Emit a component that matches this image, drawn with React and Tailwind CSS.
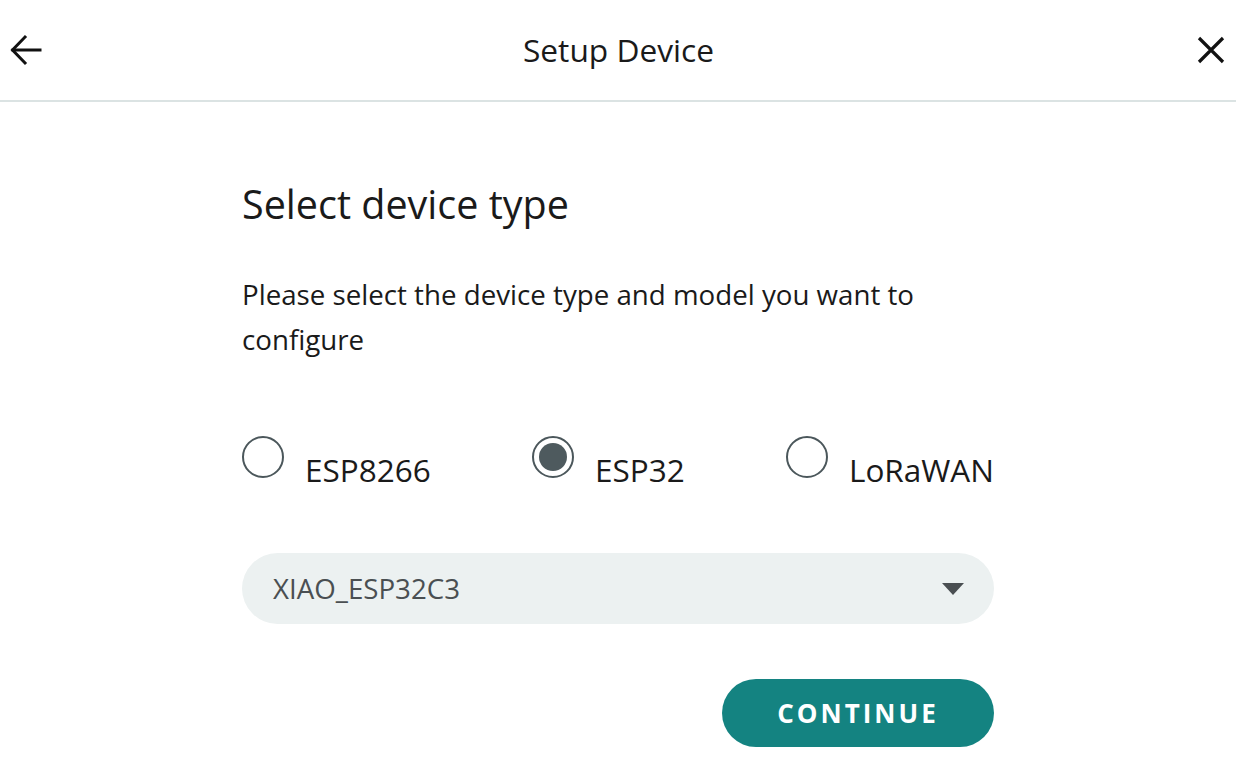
import React, { useState } from "react";

const options = ["ESP8266", "ESP32", "LoRaWAN"];

function Radio({ label, checked, onClick }) {
  return (
    <button type="button" onClick={onClick} className="flex items-start gap-[21px] text-left">
      <span className="flex h-[42px] w-[42px] items-center justify-center rounded-full border-2 border-[#4b575b]">
        {checked && <span className="h-[28px] w-[28px] rounded-full bg-[#4e5a5e]" />}
      </span>
      <span className="pt-[16px] text-[31.5px] leading-[36px] text-[#1a1a1a]">{label}</span>
    </button>
  );
}

export default function App() {
  const [sel, setSel] = useState("ESP32");
  return (
    <div className="min-h-[766px] w-full bg-white" style={{ fontFamily: '"Open Sans", "Noto Sans", sans-serif' }}>
      <header className="flex h-[102px] items-center justify-between border-b-2 border-[#dbe3e3] px-[10px]">
        <button type="button" className="flex h-[32px] w-[32px] items-center justify-center">
          <svg width="32" height="32" viewBox="0 0 32 32" fill="none" stroke="#111" strokeWidth="3" strokeLinecap="square">
            <path d="M30 16H3" />
            <path d="M15 3L2.5 16L15 29" strokeLinejoin="miter" />
          </svg>
        </button>
        <h1 className="text-[31.7px] leading-[40px] text-[#1a1a1a]">Setup Device</h1>
        <button type="button" className="mr-[-1px] flex h-[32px] w-[32px] items-center justify-center">
          <svg width="28" height="28" viewBox="0 0 28 28" fill="none" stroke="#111" strokeWidth="3.2">
            <path d="M2 2L26 26M26 2L2 26" />
          </svg>
        </button>
      </header>
      <main className="mx-auto w-[752px] pt-[78px]">
        <h2 className="text-[39.5px] leading-[48px] text-[#1a1a1a]">Select device type</h2>
        <p className="mt-[44px] text-[27.7px] leading-[45px] text-[#1a1a1a]">
          Please select the device type and model you want to configure
        </p>
        <div className="mt-[74px] flex justify-between">
          {options.map((o) => (
            <Radio key={o} label={o} checked={sel === o} onClick={() => setSel(o)} />
          ))}
        </div>
        <div className="mt-[65px] flex h-[71px] items-center justify-between rounded-full bg-[#ecf1f1] pl-[31px] pr-[30px]">
          <span className="text-[27.7px] text-[#4a4f52]">XIAO_ESP32C3</span>
          <svg width="22" height="12" viewBox="0 0 22 12">
            <path d="M0 0H22L11 12Z" fill="#4a4f52" />
          </svg>
        </div>
        <div className="mt-[55px] flex justify-end">
          <button type="button" className="flex h-[68px] w-[272px] items-center justify-center rounded-full bg-[#148381] text-[26px] font-bold tracking-[3px] text-white">
            CONTINUE
          </button>
        </div>
      </main>
    </div>
  );
}
